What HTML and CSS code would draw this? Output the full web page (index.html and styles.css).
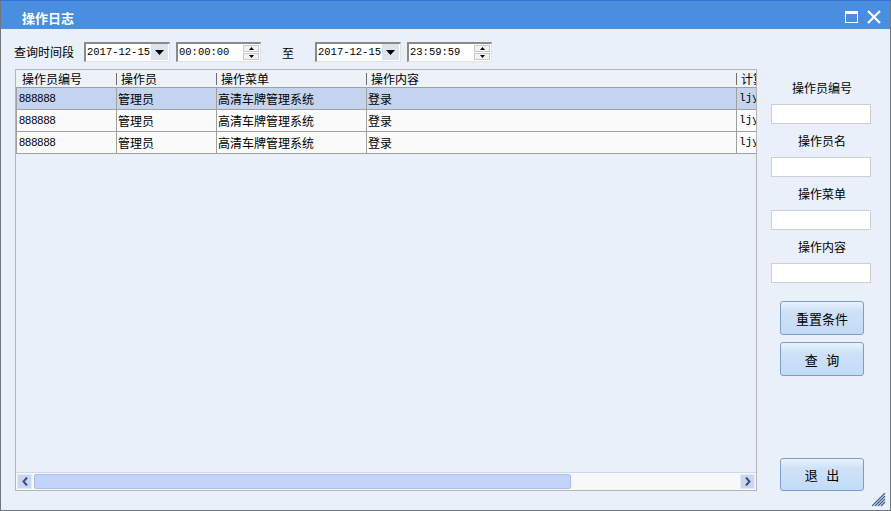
FILE: index.html
```html
<!DOCTYPE html>
<html lang="zh-CN">
<head>
<meta charset="utf-8">
<title>操作日志</title>
<link rel="stylesheet" href="styles.css">
</head>
<body>
<div class="window">
  <div class="titlebar">
    <span class="title">操作日志</span>
    <div class="title-icons">
      <svg class="ico-max" width="13" height="12" viewBox="0 0 13 12"><rect x="0.5" y="0.5" width="12" height="11" fill="none" stroke="#fff" stroke-width="1"/><rect x="0" y="0" width="13" height="3" fill="#fff"/></svg>
      <svg class="ico-close" width="14" height="14" viewBox="0 0 14 14"><path d="M1 1 L13 13 M13 1 L1 13" stroke="#fff" stroke-width="2.2" fill="none"/></svg>
    </div>
  </div>
  <div class="content">
    <div class="main">
      <div class="toolbar">
        <span class="lbl">查询时间段</span>
        <div class="combo"><span class="val">2017-12-15</span><span class="drop"><svg width="9" height="5" viewBox="0 0 9 5"><path d="M0 0 H9 L4.5 5 Z" fill="#000"/></svg></span></div>
        <div class="spin"><span class="val">00:00:00</span><span class="spinbtns"><span class="sb"><svg width="5" height="3" viewBox="0 0 5 3"><path d="M2.5 0 L5 3 H0 Z" fill="#000"/></svg></span><span class="sb"><svg width="5" height="3" viewBox="0 0 5 3"><path d="M0 0 H5 L2.5 3 Z" fill="#000"/></svg></span></span></div>
        <span class="to">至</span>
        <div class="combo"><span class="val">2017-12-15</span><span class="drop"><svg width="9" height="5" viewBox="0 0 9 5"><path d="M0 0 H9 L4.5 5 Z" fill="#000"/></svg></span></div>
        <div class="spin"><span class="val">23:59:59</span><span class="spinbtns"><span class="sb"><svg width="5" height="3" viewBox="0 0 5 3"><path d="M2.5 0 L5 3 H0 Z" fill="#000"/></svg></span><span class="sb"><svg width="5" height="3" viewBox="0 0 5 3"><path d="M0 0 H5 L2.5 3 Z" fill="#000"/></svg></span></span></div>
      </div>
      <div class="grid">
        <div class="grid-body">
          <div class="ghead">
            <div class="hc">操作员编号</div>
            <div class="hc">操作员</div>
            <div class="hc">操作菜单</div>
            <div class="hc">操作内容</div>
            <div class="hc">计算机名</div>
          </div>
          <div class="grow sel">
            <div class="c num">888888</div>
            <div class="c">管理员</div>
            <div class="c">高清车牌管理系统</div>
            <div class="c">登录</div>
            <div class="c mono">ljy-PC</div>
          </div>
          <div class="grow">
            <div class="c num">888888</div>
            <div class="c">管理员</div>
            <div class="c">高清车牌管理系统</div>
            <div class="c">登录</div>
            <div class="c mono">ljy-PC</div>
          </div>
          <div class="grow">
            <div class="c num">888888</div>
            <div class="c">管理员</div>
            <div class="c">高清车牌管理系统</div>
            <div class="c">登录</div>
            <div class="c mono">ljy-PC</div>
          </div>
        </div>
        <div class="hscroll">
          <span class="arrow"><svg width="6" height="9" viewBox="0 0 6 9"><path d="M5 0.5 L1.5 4.5 L5 8.5" stroke="#3d4f73" stroke-width="2" fill="none"/></svg></span>
          <span class="track"><span class="thumb"></span></span>
          <span class="arrow"><svg width="6" height="9" viewBox="0 0 6 9"><path d="M1 0.5 L4.5 4.5 L1 8.5" stroke="#3d4f73" stroke-width="2" fill="none"/></svg></span>
        </div>
      </div>
    </div>
    <div class="side">
      <div class="field"><span class="flbl">操作员编号</span><span class="inp"></span></div>
      <div class="field"><span class="flbl">操作员名</span><span class="inp"></span></div>
      <div class="field"><span class="flbl">操作菜单</span><span class="inp"></span></div>
      <div class="field"><span class="flbl">操作内容</span><span class="inp"></span></div>
      <button class="btn first">重置条件</button>
      <button class="btn">查&nbsp;&nbsp;&nbsp;询</button>
      <button class="btn exit">退&nbsp;&nbsp;&nbsp;出</button>
    </div>
  </div>
  <svg class="grip" width="14" height="14" viewBox="0 0 14 14"><path d="M13 3 L3 13 M13 6 L6 13 M13 9 L9 13 M13 0 L0 13" stroke="#3a5a8a" stroke-width="1.2" fill="none"/></svg>
</div>
</body>
</html>
```

FILE: styles.css
```css
html, body {
  margin: 0;
  padding: 0;
  background: #e9f0f9;
}
body {
  font-family: "Noto Sans CJK SC", "Noto Sans", sans-serif;
  font-size: 12px;
  color: #000;
}
.window {
  position: relative;
  width: 891px;
  height: 511px;
  box-sizing: border-box;
  border: 1px solid #6e7680;
  border-top: 1px solid #2f73d8;
  background: #e9f0f9;
  display: flex;
  flex-direction: column;
  overflow: hidden;
}
.titlebar {
  height: 28px;
  background: #4a8ee0;
  display: flex;
  align-items: center;
  padding-left: 21px;
  padding-right: 9px;
  flex: none;
}
.title {
  color: #fff;
  font-weight: bold;
  font-size: 13px;
  padding-top: 4px;
  flex: 1;
}
.title-icons {
  display: flex;
  align-items: center;
  gap: 9px;
  padding-top: 4px;
}
.content {
  flex: 1;
  display: flex;
  min-height: 0;
}
.main {
  width: 742px;
  padding: 13px 0 19px 14px;
  display: flex;
  flex-direction: column;
  flex: none;
}
.toolbar {
  height: 20px;
  display: flex;
  align-items: center;
  margin-left: -1px;
}
.lbl {
  width: 70px;
  line-height: 20px;
}
.combo, .spin {
  box-sizing: border-box;
  height: 20px;
  background: #fff;
  border-top: 2px solid #8a8a8a;
  border-left: 2px solid #8a8a8a;
  border-right: 1px solid #e3e3e3;
  border-bottom: 1px solid #e3e3e3;
  display: flex;
  align-items: stretch;
  font-family: "Liberation Mono", "DejaVu Sans Mono", monospace;
  font-size: 10.5px;
  white-space: nowrap;
}
.combo { width: 86px; }
.spin { width: 85px; margin-left: 6px; }
.combo .val, .spin .val {
  flex: 1;
  line-height: 17px;
  padding-left: 1px;
  overflow: hidden;
}
.drop {
  width: 17px;
  background: #dde3ea;
  display: flex;
  align-items: center;
  justify-content: center;
  margin: 0 1px 1px 0;
}
.spinbtns {
  width: 16px;
  display: flex;
  flex-direction: column;
  gap: 1px;
  margin: 1px 1px 1px 0;
}
.sb {
  flex: 1;
  background: #f2f2f2;
  border: 1px solid #c8c8c8;
  display: flex;
  align-items: center;
  justify-content: center;
}
.to {
  margin: 0 21px 0 21px;
}
.grid {
  margin-top: 7px;
  flex: 1;
  border: 1px solid #b4b4b4;
  display: flex;
  flex-direction: column;
  overflow: hidden;
  min-height: 0;
}
.grid-body {
  flex: 1;
  overflow: hidden;
}
.ghead, .grow {
  display: grid;
  grid-template-columns: 100px 100px 150px 370px 100px;
  width: 820px;
}
.ghead {
  height: 17px;
  border-bottom: 1px solid #a0a0a0;
  background: #edf2f9;
}
.hc {
  line-height: 17px;
  padding-left: 5px;
  position: relative;
  white-space: nowrap;
  overflow: hidden;
}
.hc:first-child { padding-left: 6px; }
.hc + .hc::before {
  content: "";
  position: absolute;
  left: 0;
  top: 3px;
  width: 1px;
  height: 12px;
  background: #6f6f6f;
}
.grow {
  height: 21px;
  border-bottom: 1px solid #a0a0a0;
  background: #fbfbfb;
}
.grow.sel { background: #c5d4ee; }
.c {
  border-left: 1px solid #a0a0a0;
  line-height: 21px;
  padding-left: 1px;
  white-space: nowrap;
  overflow: hidden;
}
.num {
  font-family: "Liberation Sans", "DejaVu Sans", sans-serif;
  font-size: 11px;
  padding-left: 2px;
}
.mono {
  font-family: "Liberation Mono", "DejaVu Sans Mono", monospace;
  font-size: 11px;
  padding-left: 2px;
}
.hscroll {
  height: 17px;
  display: flex;
  align-items: stretch;
  border-top: 1px solid #cfd8e6;
  background: #f8f8f8;
  flex: none;
}
.arrow {
  width: 13px;
  margin: 1px;
  background: #c9d7f2;
  border: 1px solid #e2e9f7;
  display: flex;
  align-items: center;
  justify-content: center;
}
.track {
  flex: 1;
  padding: 1px 0;
  display: flex;
}
.thumb {
  width: 535px;
  background: #c4d4f8;
  border: 1px solid #a9c0ea;
  border-radius: 2px;
  margin-left: 1px;
}
.side {
  flex: 1;
  padding: 50px 0 19px 14px;
  display: flex;
  flex-direction: column;
  align-items: flex-start;
  width: 100px;
}
.field {
  width: 100px;
  display: flex;
  flex-direction: column;
  align-items: center;
}
.flbl {
  line-height: 18px;
  margin-bottom: 7px;
  padding-left: 2px;
}
.inp {
  box-sizing: border-box;
  width: 100px;
  height: 20px;
  background: #fff;
  border: 1px solid #cfcfcf;
  margin-bottom: 8px;
}
.btn {
  box-sizing: border-box;
  width: 84px;
  height: 34px;
  margin-left: 9px;
  border: 1px solid #7c9dc8;
  border-radius: 3px;
  background: linear-gradient(#e9f2fd 0%, #cfe1f8 30%, #c3dbf6 100%);
  font-family: "Noto Sans CJK SC", sans-serif;
  font-size: 13px;
  color: #000;
  padding: 0;
}
.btn.first { margin-top: 10px; }
.btn + .btn { margin-top: 7px; }
.btn.exit { margin-top: auto; height: 33px; }
.grip {
  position: absolute;
  right: 4px;
  bottom: 3px;
}
```
